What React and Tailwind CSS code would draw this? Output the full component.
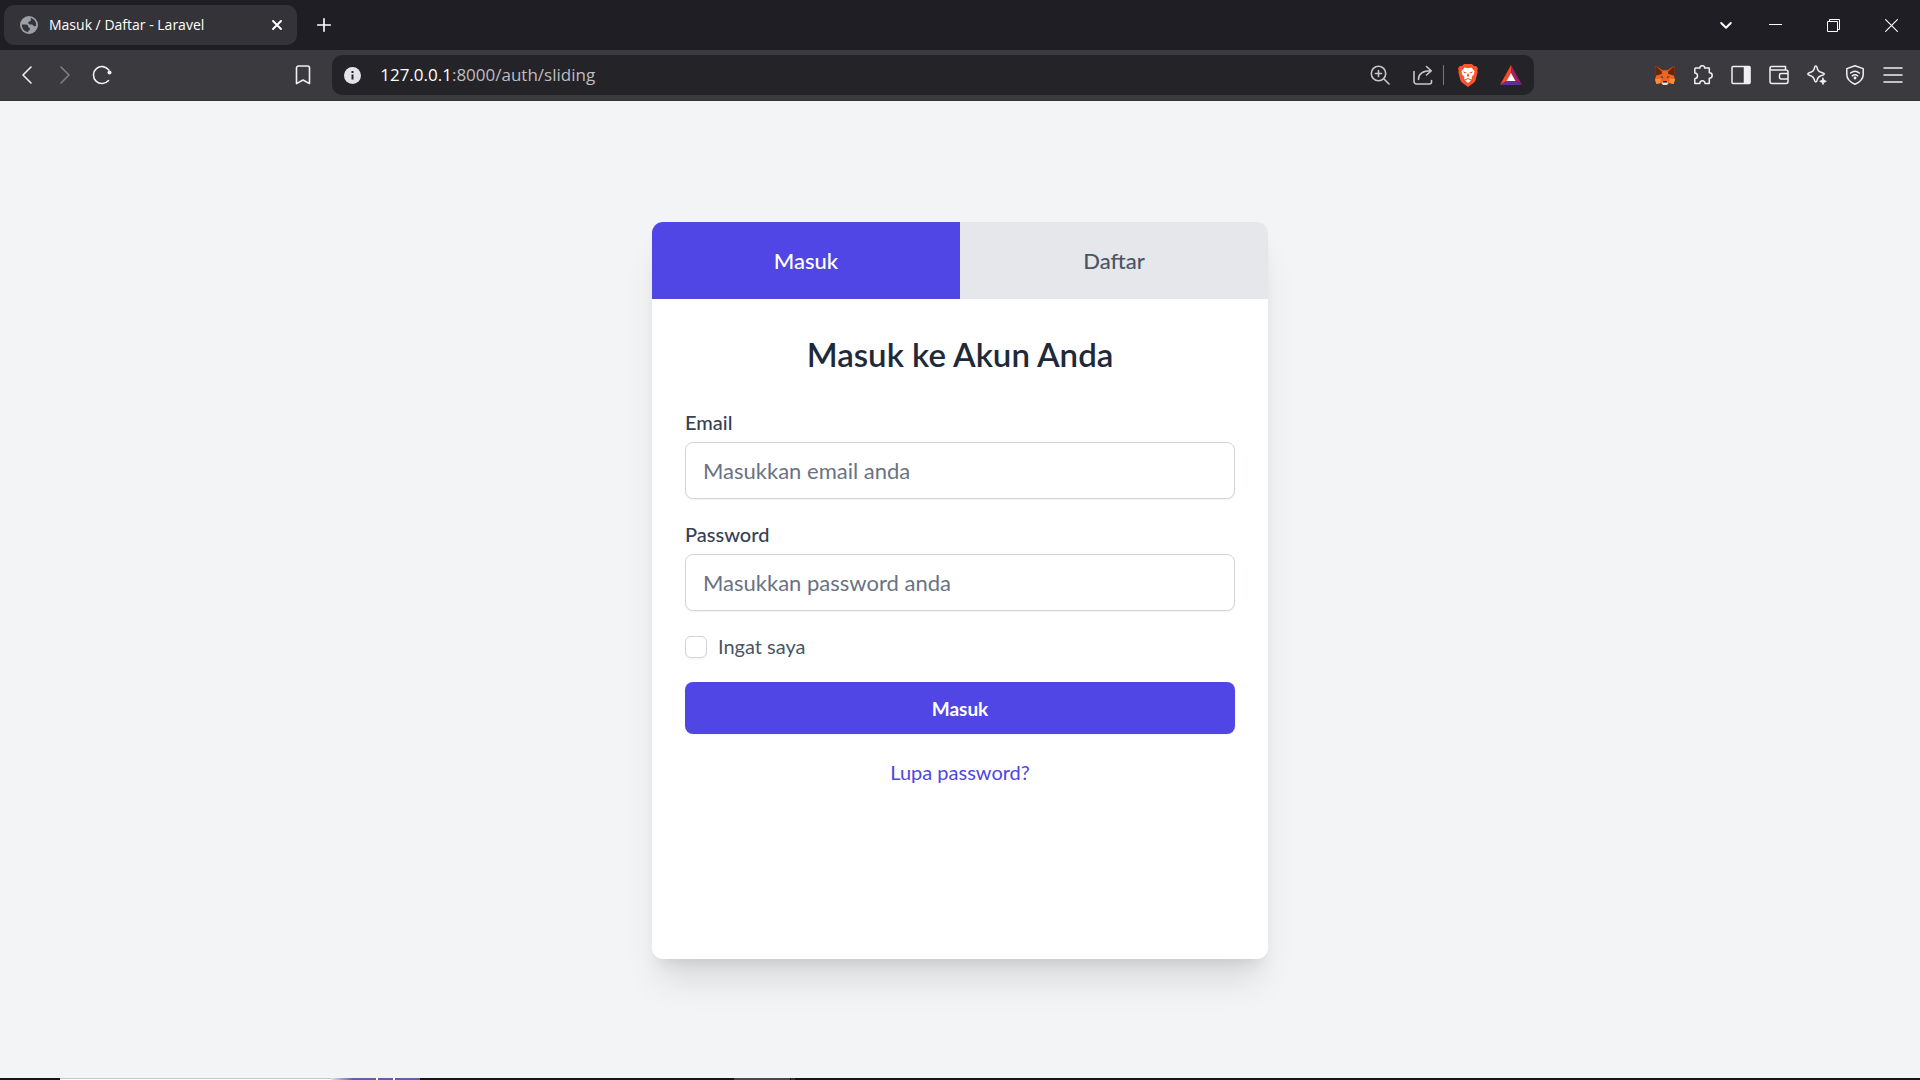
import React, { useState } from "react";

function Icon({ children, size = 20, className = "", sw = 1.5 }) {
  return (
    <svg width={size} height={size} viewBox="0 0 20 20" fill="none" stroke="currentColor" strokeWidth={sw} strokeLinecap="round" strokeLinejoin="round" className={"shrink-0 " + className} aria-hidden="true">
      {children}
    </svg>
  );
}

function IconButton({ label, children, className = "" }) {
  return (
    <button type="button" aria-label={label} className={"flex shrink-0 items-center justify-center " + className}>
      {children}
    </button>
  );
}

function TabStrip() {
  return (
    <div className="flex h-[50px] items-center bg-[#1f1e24] text-white">
      <div className="ml-1 flex h-10 w-[293px] items-center rounded-[10px] bg-[#343338] pl-4 pr-3">
        <svg width="18" height="18" viewBox="0 0 18 18" className="shrink-0" aria-hidden="true">
          <circle cx="9" cy="9" r="9" fill="#9aa0a6" />
          <path d="M1.8 8.6H5.6C7.6 8.6 8.2 9.5 8.2 10.6C8.2 11.5 8.8 11.8 9.8 11.8V13.4C9.8 14.3 9 14.8 8.1 14.8V16.2C4.600 15.800 1.800 12.900 1.800 8.600ZM10.800 2C14 2.700 16.300 5.600 16.200 9.200C15.900 10.100 15.300 10.400 14.300 10.200C13.400 10 13.300 9.300 12.500 8.800C11.700 8.300 10.200 8.900 9.200 8.300C8 7.600 8 6 9.100 5.500C10.100 5.100 10.800 5.500 10.800 4.300Z" fill="#343338" />
        </svg>
        <span className="ml-[11px] grow truncate font-['Open_Sans','Noto_Sans',sans-serif] text-[14px] leading-5">Masuk / Daftar - Laravel</span>
        <IconButton label="Tutup tab" className="size-4">
          <Icon size={16} sw={2.4}><path d="M5 5L15 15M15 5L5 15" /></Icon>
        </IconButton>
      </div>
      <IconButton label="Tab baru" className="ml-[18px] size-[18px]">
        <Icon size={18} sw={1.8}><path d="M10 3V17M3 10H17" /></Icon>
      </IconButton>
      <div className="ml-auto flex items-center">
        <IconButton label="Cari tab" className="h-10 w-8">
          <Icon size={16} sw={2.5}><path d="M4 7.500L10 13.500L16 7.500" /></Icon>
        </IconButton>
        <IconButton label="Kecilkan" className="ml-1 h-10 w-[58px]">
          <svg width="13" height="13" viewBox="0 0 13 13" aria-hidden="true"><path d="M0 5.500H13" stroke="#fff" /></svg>
        </IconButton>
        <IconButton label="Pulihkan" className="h-10 w-[58px]">
          <svg width="13" height="13" viewBox="0 0 13 13" fill="none" stroke="#fff" aria-hidden="true"><path d="M.5 2.500H10.500V12.500H.5ZM2.500 2.500V.5H12.500V10.500H10.500" /></svg>
        </IconButton>
        <IconButton label="Tutup" className="h-10 w-[58px]">
          <svg width="13" height="13" viewBox="0 0 13 13" fill="none" stroke="#fff" strokeWidth="1.100" aria-hidden="true"><path d="M.3 .3L12.700 12.700M12.700 .3L.3 12.700" /></svg>
        </IconButton>
      </div>
    </div>
  );
}

function BraveIcon() {
  return (
    <svg width="20" height="23" viewBox="0 0 20 23" aria-hidden="true">
      <path d="M6 0H14L16 2L18.200 2L20 4.600L19.200 6.600L19.700 8L17.700 15.800C17.300 17.300 16.600 18.200 15.400 19.100L10 23L4.600 19.100C3.400 18.200 2.700 17.300 2.300 15.800L.3 8L.8 6.600L0 4.600L1.800 2L4 2Z" fill="#fb542b" />
      <path d="M10 4.200L13.500 3.600L16.700 7.400L16 9L16.300 10L13.500 13L14 14.300L13.400 15.400L10 13.900L6.600 15.400L6 14.300L6.500 13L3.700 10L4 9L3.300 7.400L6.500 3.600ZM10 14.900L13 16.400L10 19L7 16.400Z" fill="#fff" />
      <path d="M5.300 7.600L8.500 8.400L8.300 9.300L6 9ZM14.700 7.600L11.500 8.400L11.700 9.300L14 9ZM9.700 9.300H10.300L11.300 12L10 12.700L8.700 12Z" fill="#fb542b" />
    </svg>
  );
}

function BatIcon() {
  return (
    <svg width="22" height="20" viewBox="0 0 22 20" aria-hidden="true">
      <path d="M11 0L0 20L7 15.800L11 8.500Z" fill="#ff4724" />
      <path d="M11 0L22 20L15 15.800L11 8.500Z" fill="#9e1f63" />
      <path d="M0 20H22L15 15.800H7Z" fill="#662d91" />
      <path d="M11 8L6.500 16H15.500Z" fill="#fff" />
    </svg>
  );
}

function FoxIcon() {
  return (
    <svg width="20" height="19" viewBox="0 0 20 19" aria-hidden="true">
      <path d="M.8 0L7.600 4.200H12.400L19.200 0L20 4L18.800 9.500L20 13.200L18.600 18L14.500 17L12 19H8L5.500 17L1.400 18L0 13.200L1.200 9.500L0 4Z" fill="#f0641e" />
      <path d="M.8 0L7 4.200L6.800 8L1.200 9.500L0 4ZM19.200 0L13 4.200L13.200 8L18.800 9.500L20 4Z" fill="#6b2409" />
      <path d="M.8 0L7.600 4.200L7.200 6ZM19.200 0L12.400 4.200L12.800 6Z" fill="#d9531a" />
      <path d="M0 13.200L5.800 12.600L5.500 17L1.400 18ZM20 13.200L14.200 12.600L14.500 17L18.600 18Z" fill="#ff8d3f" />
      <path d="M5.200 10L8.200 11L7.600 12.500ZM14.800 10L11.800 11L12.400 12.500Z" fill="#233447" />
      <path d="M7.800 15.500H12.200L12.800 17.300L12 19H8L7.200 17.300Z" fill="#e9dfd8" />
      <path d="M8.200 15H11.800L12.100 16.600H7.900Z" fill="#1d1d24" />
    </svg>
  );
}

function Toolbar() {
  return (
    <div className="flex h-[51px] items-center border-b border-[#352f3b] bg-[#3b3a3f] px-[17px] text-[#f0f0f3]">
      <IconButton label="Kembali" className="size-5">
        <Icon sw={1.6}><path d="M14 2L6 10L14 18" /></Icon>
      </IconButton>
      <IconButton label="Maju" className="ml-[18px] size-5 text-[#838287]">
        <Icon sw={1.5}><path d="M6 2L14 10L6 18" /></Icon>
      </IconButton>
      <IconButton label="Muat ulang" className="ml-[17px] size-5">
        <Icon sw={1.6}><path d="M16.500 15.500A8.500 8.500 0 1 1 16.800 5" /><circle cx="17.500" cy="7.500" r="2" fill="currentColor" stroke="none" /></Icon>
      </IconButton>
      <div className="grow-[3]" />
      <IconButton label="Markah" className="size-5">
        <Icon sw={1.6}><path d="M3.500 3A2 2 0 0 1 5.500 1H14.500A2 2 0 0 1 16.500 3V18.600L10 15L3.500 18.600Z" /></Icon>
      </IconButton>
      <div className="ml-[19px] flex h-10 min-w-0 shrink basis-[1202px] items-center rounded-[10px] bg-[#242428] px-3">
        <IconButton label="Informasi situs" className="size-[17px]">
          <svg width="17" height="17" viewBox="0 0 17 17" aria-hidden="true"><circle cx="8.500" cy="8.500" r="8.500" fill="#e3e3ea" /><path d="M8.500 7.500V12.500M8.500 4V6" stroke="#242428" strokeWidth="2" /></svg>
        </IconButton>
        <div className="ml-[19px] grow font-['Open_Sans','Noto_Sans',sans-serif] text-[17px] leading-6 text-[#bdbdc2]"><span className="text-white">127.0.0.1</span>:8000/auth/sliding</div>
        <IconButton label="Perbesar" className="size-5 text-[#c6c6ca]">
          <Icon sw={1.6}><circle cx="8.500" cy="8.500" r="7.200" /><path d="M14 14L19 19M8.500 5.500V11.500M5.500 8.500H11.500" /></Icon>
        </IconButton>
        <IconButton label="Bagikan" className="ml-[23px] size-5 text-[#c6c6ca]">
          <Icon sw={1.6}><path d="M1 6.500V16.500A2.500 2.500 0 0 0 3.500 19H16.500A2 2 0 0 0 18.500 17V15.500M5.500 14.500C5.500 9 9 5.800 18 5.800M13.500 1.500L18.200 5.800L13.500 10" /></Icon>
        </IconButton>
        <span className="ml-2.5 h-5 w-px bg-[#77767b]" />
        <IconButton label="Perisai Brave" className="ml-3.5 w-5"><BraveIcon /></IconButton>
        <IconButton label="Brave Rewards" className="ml-[22px] w-[22px]"><BatIcon /></IconButton>
      </div>
      <div className="grow-[2]" />
      <div className="flex items-center gap-[18px]">
        <IconButton label="MetaMask" className="size-5"><FoxIcon /></IconButton>
        <IconButton label="Ekstensi" className="size-5">
          <Icon><path d="M2.500 3H7C6.700 1.500 8 .7 9.300 .7S11.900 1.500 11.600 3H16.300V7.800C17.900 7.800 19.200 9 19.200 10.500S18 13.200 16.300 13.200V18.500H12C12 16.900 10.900 15.700 9.400 15.700S6.800 16.900 6.800 18.500H1.800V13.700C3.400 13.600 4.500 12.400 4.500 10.800S3.300 8 1.800 8V3.700Z" /></Icon>
        </IconButton>
        <IconButton label="Bilah sisi" className="size-5">
          <Icon><rect x="1" y="1.500" width="18" height="17" rx="1" /><path d="M13.500 2H18.500V18H13.500Z" fill="currentColor" /></Icon>
        </IconButton>
        <IconButton label="Dompet" className="size-5">
          <Icon><path d="M1 3V16.500A2 2 0 0 0 3 18.500H17A2 2 0 0 0 19 16.500V7A2 2 0 0 0 17 5H3A2 2 0 0 1 1 3A1.500 1.500 0 0 1 2.500 1.500H16.500V5M19 8.500H12A1.500 1.500 0 0 0 10.500 10V12.500A1.500 1.500 0 0 0 12 14H19" /></Icon>
        </IconButton>
        <IconButton label="Leo" className="size-5">
          <Icon><path d="M8.800 1C9.600 1 9.900 1.800 10.100 2.800C10.700 5.500 12 6.800 14.700 7.500C16 7.900 17.300 8.100 17.300 9S16 10.200 14.700 10.500C12 11.200 10.700 12.500 10.100 15.200C9.900 16.200 9.600 17 8.800 17S7.700 16.200 7.500 15.200C6.900 12.500 5.600 11.200 2.900 10.500C1.800 10.200 .8 9.900 .8 9S1.800 7.800 2.900 7.500C5.600 6.800 6.900 5.500 7.500 2.800C7.700 1.800 8 1 8.800 1Z" /><path d="M16 13L17 15.300L19.300 16.300L17 17.300L16 19.600L15 17.300L12.700 16.300L15 15.300Z" fill="currentColor" strokeWidth="0.800" /></Icon>
        </IconButton>
        <IconButton label="VPN" className="size-5">
          <Icon><path d="M10 .8L18.200 3.600V9.500C18.200 14.500 14 17.500 10 19.300C6 17.500 1.800 14.500 1.800 9.500V3.600Z" /><path d="M5.600 8C8.200 5.900 11.800 5.900 14.400 8M7.300 10.800C9 9.600 11 9.600 12.700 10.800" /><circle cx="10" cy="13" r="0.700" fill="currentColor" /></Icon>
        </IconButton>
        <IconButton label="Menu" className="size-5">
          <Icon><path d="M1 3H19M1 10H19M1 17H19" /></Icon>
        </IconButton>
      </div>
    </div>
  );
}

function Field({ id, label, ...props }) {
  return (
    <div className="flex flex-col gap-1.5">
      <label htmlFor={id} className="text-[20px] leading-[27px] font-medium text-gray-700">{label}</label>
      <input id={id} {...props} className="h-[57px] w-full rounded-lg border border-gray-300 bg-white px-[17px] text-[22px] leading-[33px] text-gray-900 shadow-xs placeholder:text-gray-500" />
    </div>
  );
}

function AuthCard() {
  const [tab, setTab] = useState("masuk");
  const tabClass = (name) =>
    "h-[77px] flex-1 text-[22px] leading-[33px] font-medium " +
    (tab === name ? "bg-[#4f46e5] text-white" : "bg-gray-200 text-gray-600");
  return (
    <main className="w-full max-w-[616px] overflow-hidden rounded-[11px] bg-white shadow-[0_28px_34px_-7px_rgba(0,0,0,0.1),0_11px_14px_-8px_rgba(0,0,0,0.1)]">
      <div className="flex" role="tablist">
        <button type="button" role="tab" aria-selected={tab === "masuk"} onClick={() => setTab("masuk")} className={tabClass("masuk")}>Masuk</button>
        <button type="button" role="tab" aria-selected={tab === "daftar"} onClick={() => setTab("daftar")} className={tabClass("daftar")}>Daftar</button>
      </div>
      <form className="flex min-h-[660px] flex-col gap-[22px] p-[33px]" onSubmit={(e) => e.preventDefault()}>
        <h1 className="mb-[11px] text-center text-[33px] leading-[44px] font-semibold text-gray-800">Masuk ke Akun Anda</h1>
        <Field id="email" type="email" label="Email" placeholder="Masukkan email anda" />
        <Field id="password" type="password" label="Password" placeholder="Masukkan password anda" />
        <label className="flex items-center gap-[11px] text-[20px] leading-[27px] text-gray-600">
          <input type="checkbox" className="size-[22px] appearance-none rounded-md border border-gray-300 bg-white shadow-xs checked:bg-[#4f46e5]" />
          Ingat saya
        </label>
        <button type="submit" className="h-[52px] rounded-lg bg-[#4f46e5] text-[19px] leading-[27px] font-bold text-white shadow-xs">Masuk</button>
        <a href="#lupa" className="self-center text-[20px] leading-[33px] text-[#4f46e5]">Lupa password?</a>
      </form>
    </main>
  );
}

function TaskbarEdge() {
  return (
    <div className="flex h-0.5 bg-[#16131a]">
      <div className="ml-[60px] w-[271px] border-t border-[#c4c4c4] bg-white" />
      <div className="w-[45px] bg-linear-to-r from-[#e4e2f2] via-[#655ba6] to-[#655ba6]" />
      <div className="w-[2px] bg-white" />
      <div className="w-[15px] bg-[#655ba6]" />
      <div className="w-[2px] bg-white" />
      <div className="w-[25px] bg-[#655ba6]" />
      <div className="ml-[314px] w-14 bg-[#4a484c]" />
      <div className="ml-px w-1 bg-[#343236]" />
    </div>
  );
}

export default function App() {
  return (
    <div className="flex min-h-screen flex-col bg-gray-100">
      <header>
        <TabStrip />
        <Toolbar />
      </header>
      <div className="flex grow items-center justify-center pt-[34px] pb-8 font-[Lato,'Open_Sans',sans-serif]">
        <AuthCard />
      </div>
      <TaskbarEdge />
    </div>
  );
}
